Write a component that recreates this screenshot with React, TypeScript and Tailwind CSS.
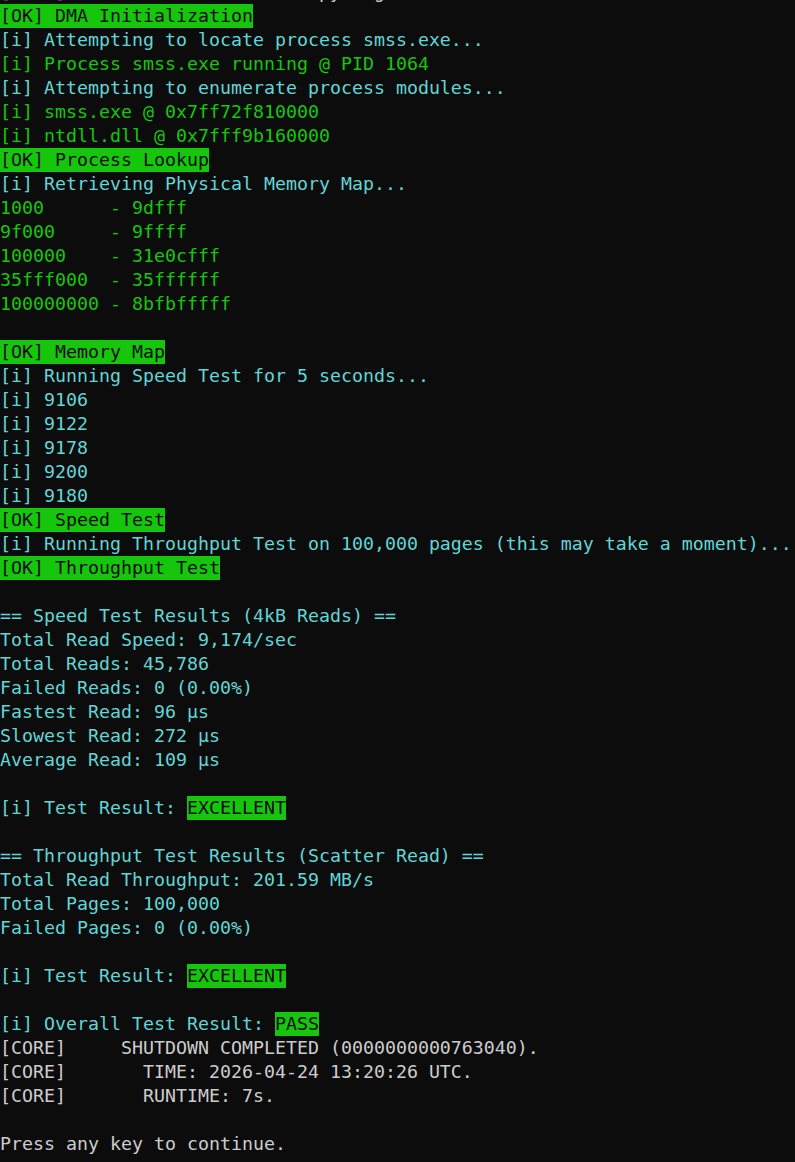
type Tone = "cyan" | "green" | "white" | "ok" | "blank";

type Line = { tone: Tone; text?: string; badge?: string };

const LINES: Line[] = [
  { tone: "white", text: "[CORE]     STARTUP COMPLETE (py) ,g" },
  { tone: "ok", text: "[OK] DMA Initialization" },
  { tone: "cyan", text: "[i] Attempting to locate process smss.exe..." },
  { tone: "green", text: "[i] Process smss.exe running @ PID 1064" },
  { tone: "cyan", text: "[i] Attempting to enumerate process modules..." },
  { tone: "green", text: "[i] smss.exe @ 0x7ff72f810000" },
  { tone: "green", text: "[i] ntdll.dll @ 0x7fff9b160000" },
  { tone: "ok", text: "[OK] Process Lookup" },
  { tone: "cyan", text: "[i] Retrieving Physical Memory Map..." },
  { tone: "green", text: "1000      - 9dfff" },
  { tone: "green", text: "9f000     - 9ffff" },
  { tone: "green", text: "100000    - 31e0cfff" },
  { tone: "green", text: "35fff000  - 35ffffff" },
  { tone: "green", text: "100000000 - 8bfbfffff" },
  { tone: "blank" },
  { tone: "ok", text: "[OK] Memory Map" },
  { tone: "cyan", text: "[i] Running Speed Test for 5 seconds..." },
  { tone: "cyan", text: "[i] 9106" },
  { tone: "cyan", text: "[i] 9122" },
  { tone: "cyan", text: "[i] 9178" },
  { tone: "cyan", text: "[i] 9200" },
  { tone: "cyan", text: "[i] 9180" },
  { tone: "ok", text: "[OK] Speed Test" },
  { tone: "cyan", text: "[i] Running Throughput Test on 100,000 pages (this may take a moment)..." },
  { tone: "ok", text: "[OK] Throughput Test" },
  { tone: "blank" },
  { tone: "cyan", text: "== Speed Test Results (4kB Reads) ==" },
  { tone: "cyan", text: "Total Read Speed: 9,174/sec" },
  { tone: "cyan", text: "Total Reads: 45,786" },
  { tone: "cyan", text: "Failed Reads: 0 (0.00%)" },
  { tone: "cyan", text: "Fastest Read: 96 µs" },
  { tone: "cyan", text: "Slowest Read: 272 µs" },
  { tone: "cyan", text: "Average Read: 109 µs" },
  { tone: "blank" },
  { tone: "cyan", text: "[i] Test Result: ", badge: "EXCELLENT" },
  { tone: "blank" },
  { tone: "cyan", text: "== Throughput Test Results (Scatter Read) ==" },
  { tone: "cyan", text: "Total Read Throughput: 201.59 MB/s" },
  { tone: "cyan", text: "Total Pages: 100,000" },
  { tone: "cyan", text: "Failed Pages: 0 (0.00%)" },
  { tone: "blank" },
  { tone: "cyan", text: "[i] Test Result: ", badge: "EXCELLENT" },
  { tone: "blank" },
  { tone: "cyan", text: "[i] Overall Test Result: ", badge: "PASS" },
  { tone: "white", text: "[CORE]     SHUTDOWN COMPLETED (0000000000763040)." },
  { tone: "white", text: "[CORE]       TIME: 2026-04-24 13:20:26 UTC." },
  { tone: "white", text: "[CORE]       RUNTIME: 7s." },
  { tone: "blank" },
  { tone: "white", text: "Press any key to continue." },
];

function TermLine({ line }: { line: Line }) {
  if (line.tone === "blank") return <div className="h-6 shrink-0" />;

  if (line.tone === "ok") {
    return (
      <div className="h-6 shrink-0">
        <span className="inline-block h-6 bg-[#16c60c] align-top text-[#0c0c0c]">{line.text}</span>
      </div>
    );
  }

  const color =
    line.tone === "cyan"
      ? "text-[#61d6d6]"
      : line.tone === "green"
        ? "text-[#16c60c]"
        : "text-[#cccccc]";

  return (
    <div className={`h-6 shrink-0 ${color}`}>
      {line.text}
      {line.badge && (
        <span className="inline-block h-6 bg-[#16c60c] align-top text-[#0c0c0c]">{line.badge}</span>
      )}
    </div>
  );
}

export default function App() {
  return (
    <div className="flex h-[1162px] w-[795px] flex-col justify-end overflow-hidden bg-[#0c0c0c] pb-[6px] font-['DejaVu_Sans_Mono',monospace] text-[18.27px] leading-6 whitespace-pre">
      {LINES.map((line, i) => (
        <TermLine key={i} line={line} />
      ))}
    </div>
  );
}
